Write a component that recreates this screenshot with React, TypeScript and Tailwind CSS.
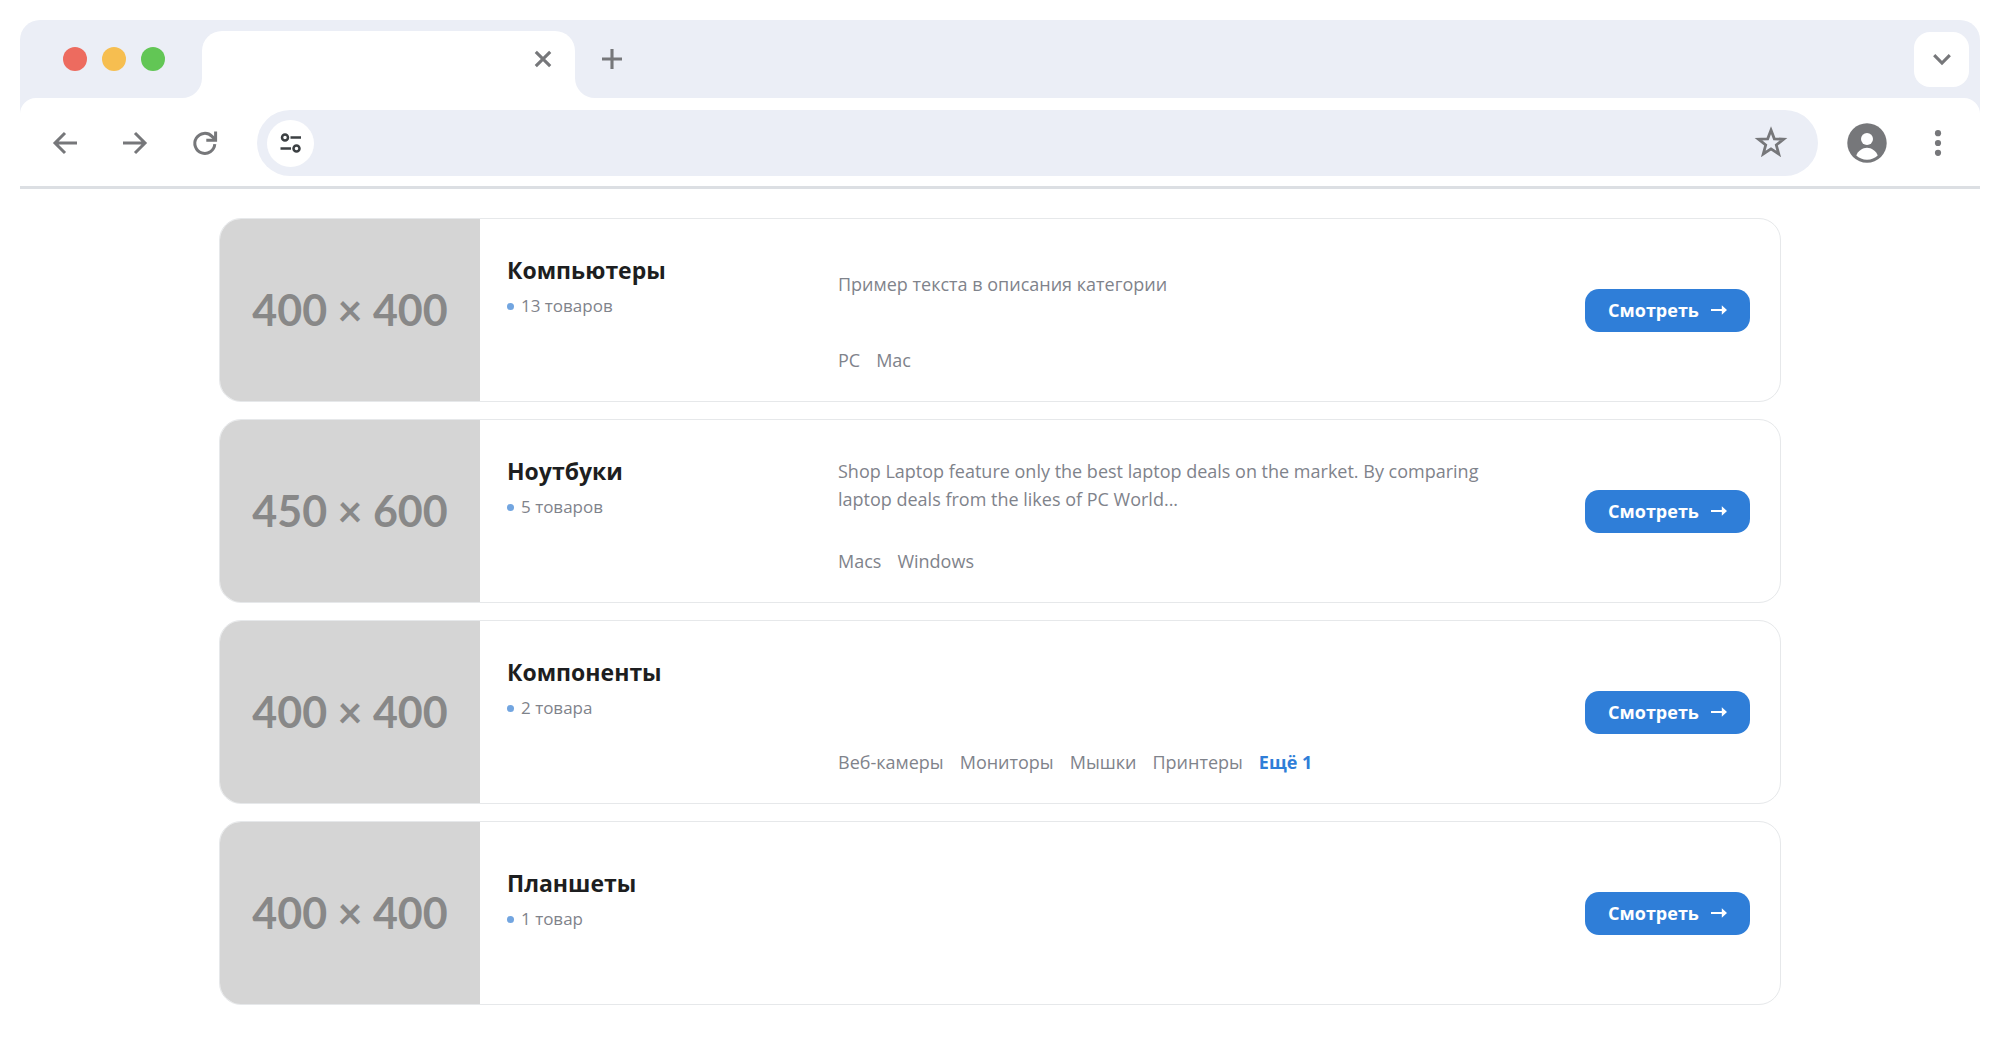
import { useState } from 'react';

interface Category {
  name: string;
  count: string;
  image: string;
  description?: string;
  tags?: string[];
  more?: string;
}

const categories: Category[] = [
  {
    name: 'Компьютеры',
    count: '13 товаров',
    image: '400 × 400',
    description: 'Пример текста в описания категории',
    tags: ['PC', 'Mac'],
  },
  {
    name: 'Ноутбуки',
    count: '5 товаров',
    image: '450 × 600',
    description:
      'Shop Laptop feature only the best laptop deals on the market. By comparing laptop deals from the likes of PC World...',
    tags: ['Macs', 'Windows'],
  },
  {
    name: 'Компоненты',
    count: '2 товара',
    image: '400 × 400',
    tags: ['Веб-камеры', 'Мониторы', 'Мышки', 'Принтеры'],
    more: 'Ещё 1',
  },
  {
    name: 'Планшеты',
    count: '1 товар',
    image: '400 × 400',
  },
];

function TabStrip() {
  return (
    <div className="flex h-[78px] items-center pr-[11px]">
      {/* Window controls */}
      <div className="flex w-[182px] gap-[15px] pl-[43px]">
        <span className="size-6 rounded-full bg-[#ed6b5f]" />
        <span className="size-6 rounded-full bg-[#f6be50]" />
        <span className="size-6 rounded-full bg-[#62c655]" />
      </div>

      {/* Active tab */}
      <div className="relative mt-[11px] flex h-[67px] w-[373px] items-center justify-end rounded-t-[20px] bg-white pr-4 pb-[11px]">
        <svg className="absolute bottom-0 -left-5 size-5" viewBox="0 0 20 20" fill="#fff">
          <path d="M20 0v20H0A20 20 0 0 0 20 0z" />
        </svg>
        <svg className="absolute -right-5 bottom-0 size-5" viewBox="0 0 20 20" fill="#fff">
          <path d="M0 0v20h20A20 20 0 0 1 0 0z" />
        </svg>
        <button type="button" aria-label="Закрыть вкладку">
          <svg className="size-8" viewBox="0 0 32 32" fill="none" stroke="#76777a" strokeWidth="3.1">
            <path d="M8.8 8.8l14.4 14.4M23.2 8.8L8.8 23.2" />
          </svg>
        </button>
      </div>

      <button type="button" aria-label="Новая вкладка" className="ml-[21px]">
        <svg className="size-8" viewBox="0 0 32 32" fill="none" stroke="#76777a" strokeWidth="3.1">
          <path d="M16 6v20M6 16h20" />
        </svg>
      </button>

      <button
        type="button"
        aria-label="Поиск вкладок"
        className="ml-auto flex size-[55px] items-center justify-center rounded-2xl bg-white"
      >
        <svg className="size-8" viewBox="0 0 32 32" fill="none" stroke="#76777a" strokeWidth="3.1">
          <path d="M8.2 12.2l7.8 7.8 7.8-7.8" />
        </svg>
      </button>
    </div>
  );
}

function Toolbar() {
  const [url, setUrl] = useState('');

  return (
    <div className="flex h-[91px] items-center rounded-t-2xl border-b-3 border-[#dcdfe3] bg-white pt-0.5 pr-[26px] pl-[29px]">
      <div className="flex gap-[38px]">
        <button type="button" aria-label="Назад">
          <svg className="size-8" viewBox="0 0 32 32" fill="none" stroke="#76777a" strokeWidth="3">
            <path d="M28 16H6M16 6L6 16l10 10" />
          </svg>
        </button>
        <button type="button" aria-label="Вперёд">
          <svg className="size-8" viewBox="0 0 32 32" fill="none" stroke="#76777a" strokeWidth="3">
            <path d="M4 16h22M16 6l10 10-10 10" />
          </svg>
        </button>
        <button type="button" aria-label="Обновить">
          <svg className="size-8" viewBox="0 0 32 32" fill="none" stroke="#76777a" strokeWidth="3">
            <path d="M25.8 17.2a10 10 0 1 1-2.8-7.8l3.5 3.5" />
            <path d="M26.6 4.5v8.8h-9.3" />
          </svg>
        </button>
      </div>

      {/* Address bar */}
      <div className="ml-9 flex h-[66px] flex-1 items-center rounded-full bg-[#ebeef6] pr-[27px] pl-2.5">
        <button
          type="button"
          aria-label="Сведения о сайте"
          className="flex size-[47px] items-center justify-center rounded-full bg-white"
        >
          <svg className="size-8" viewBox="0 0 32 32" fill="none" stroke="#3c4043" strokeWidth="2.5">
            <circle cx="10" cy="10.5" r="3" />
            <path d="M15.5 10.5h10.5M5.5 21.5h10.500" />
            <circle cx="21.5" cy="21.5" r="3" />
          </svg>
        </button>
        <input
          type="text"
          aria-label="Адресная строка"
          value={url}
          onChange={(e) => setUrl(e.target.value)}
          className="min-w-0 flex-1 bg-transparent px-4 text-lg text-[#3c4043] outline-none"
        />
        <button type="button" aria-label="Добавить в закладки">
          <svg className="size-10" viewBox="0 0 40 40" fill="none" stroke="#76777a" strokeWidth="2.8" strokeMiterlimit="8">
            <path d="M20 7.100L23.300 15.800 32.550 16.200 25.300 22 27.760 31 20 25.900 12.240 31 14.700 22 7.450 16.200 16.700 15.800z" />
          </svg>
        </button>
      </div>

      <button type="button" aria-label="Профиль" className="ml-[29px]">
        <svg className="size-10" viewBox="0 0 40 40">
          <circle cx="20" cy="20" r="19.7" fill="#76777a" />
          <circle cx="20" cy="16" r="6" fill="#fff" />
          <path d="M9.3 32.5C11 28 15.5 24.8 20 24.8s9 3.2 10.7 7.7c-2.7 2.6-6.5 4.2-10.7 4.2s-8-1.6-10.7-4.2z" fill="#fff" />
        </svg>
      </button>
      <button type="button" aria-label="Меню" className="ml-[35px]">
        <svg className="size-8" viewBox="0 0 32 32" fill="#76777a">
          <circle cx="16" cy="6.2" r="3.1" />
          <circle cx="16" cy="16" r="3.1" />
          <circle cx="16" cy="25.8" r="3.1" />
        </svg>
      </button>
    </div>
  );
}

function CategoryCard({ category }: { category: Category }) {
  return (
    <article className="flex h-[184px] overflow-hidden rounded-[22px] border border-[#e6e8ea] bg-white">
      <div className="flex w-[260px] shrink-0 items-center justify-center bg-[#d5d5d5] font-['Lato',sans-serif] text-[43px] font-bold text-[#888888]">
        {category.image}
      </div>

      <div
        className={`flex w-[358px] shrink-0 flex-col justify-center pl-[27px] ${category.tags ? 'pb-[46px]' : 'pb-[26px]'}`}
      >
        <h2 className="text-[23px] leading-8 font-bold text-[#1d1e20]">{category.name}</h2>
        <p className="mt-1.5 flex items-center gap-[7px] text-[17px] leading-7 text-[#7f838b]">
          <span className="size-[7px] rounded-full bg-[#72a5e0]" />
          {category.count}
        </p>
      </div>

      <div className="flex flex-1 flex-col justify-between pt-[37px] pb-[27px] text-lg text-[#7f838b]">
        <div className="flex h-14 items-center">
          <p className="max-w-[670px] leading-7">{category.description}</p>
        </div>
        {category.tags && (
          <div className="flex gap-4 leading-7">
            {category.tags.map((tag) => (
              <a key={tag} href="#">
                {tag}
              </a>
            ))}
            {category.more && (
              <a href="#" className="font-bold text-[#2f7ed8]">
                {category.more}
              </a>
            )}
          </div>
        )}
      </div>

      <div className="flex shrink-0 items-center pr-[30px]">
        <a
          href="#"
          className="flex h-[43px] w-[165px] items-center justify-center gap-3 rounded-[14px] bg-[#2f7ed8] text-lg font-bold text-white"
        >
          Смотреть
          <svg className="h-3 w-4" viewBox="0 0 16 12" fill="#fff">
            <path d="M0 5h10.8V1.3L16 6l-5.2 4.7V7H0z" />
          </svg>
        </a>
      </div>
    </article>
  );
}

export default function App() {
  return (
    <div className="min-h-screen bg-white p-5 font-['Open_Sans','Noto_Sans',sans-serif]">
      <header className="rounded-t-[20px] bg-[#ebeef6]">
        <TabStrip />
        <Toolbar />
      </header>

      <main className="mx-auto mt-[29px] flex max-w-[1562px] flex-col gap-[17px]">
        {categories.map((category) => (
          <CategoryCard key={category.name} category={category} />
        ))}
      </main>
    </div>
  );
}
